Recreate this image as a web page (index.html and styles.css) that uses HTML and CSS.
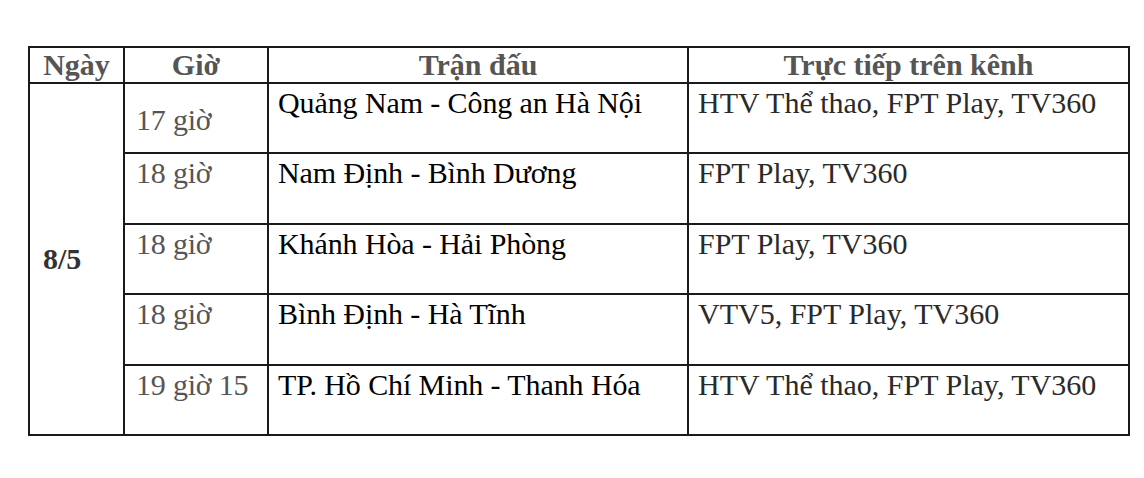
FILE: index.html
```html
<!DOCTYPE html>
<html lang="vi">
<head>
<meta charset="utf-8">
<link rel="stylesheet" href="styles.css">
</head>
<body>
<div class="page">
<table class="schedule">
  <colgroup>
    <col class="c-day"><col class="c-time"><col class="c-match"><col class="c-chan">
  </colgroup>
  <thead>
    <tr class="head-row">
      <th>Ngày</th><th>Giờ</th><th>Trận đấu</th><th>Trực tiếp trên kênh</th>
    </tr>
  </thead>
  <tbody>
    <tr class="row">
      <td class="day" rowspan="5">8/5</td>
      <td class="time first">17 giờ</td>
      <td class="match">Quảng Nam - Công an Hà Nội</td>
      <td class="chan">HTV Thể thao, FPT Play, TV360</td>
    </tr>
    <tr class="row">
      <td class="time">18 giờ</td>
      <td class="match">Nam Định - Bình Dương</td>
      <td class="chan">FPT Play, TV360</td>
    </tr>
    <tr class="row">
      <td class="time">18 giờ</td>
      <td class="match">Khánh Hòa - Hải Phòng</td>
      <td class="chan">FPT Play, TV360</td>
    </tr>
    <tr class="row">
      <td class="time">18 giờ</td>
      <td class="match">Bình Định - Hà Tĩnh</td>
      <td class="chan">VTV5, FPT Play, TV360</td>
    </tr>
    <tr class="row">
      <td class="time">19 giờ 15</td>
      <td class="match">TP. Hồ Chí Minh - Thanh Hóa</td>
      <td class="chan">HTV Thể thao, FPT Play, TV360</td>
    </tr>
  </tbody>
</table>
</div>
</body>
</html>
```
FILE: styles.css
```css
html, body {
  margin: 0;
  padding: 0;
  background: #ffffff;
}
.page {
  padding: 46px 0 0 28px;
}
.schedule {
  border-collapse: collapse;
  table-layout: fixed;
  width: 1100px;
  font-family: "Liberation Serif", "Times New Roman", serif;
}
.c-day { width: 95px; }
.c-time { width: 144px; }
.c-match { width: 420px; }
.c-chan { width: 441px; }
.head-row { height: 36px; }
.row { height: 70.4px; }
.schedule th, .schedule td {
  border: 2px solid #1a1a1a;
  padding: 0;
}
.schedule th {
  font-size: 30px;
  font-weight: bold;
  color: #555;
  text-align: center;
  vertical-align: middle;
  line-height: 32px;
}
.schedule td {
  vertical-align: top;
  font-size: 30px;
  line-height: 34px;
  padding: 2px 10px 0 9px;
}
.schedule td.day {
  vertical-align: middle;
  font-weight: bold;
  color: #333;
  padding: 0 0 0 13px;
}
.schedule td.time {
  color: #555;
  padding-left: 11px;
  letter-spacing: -0.2px;
}
.schedule td.time.first {
  padding-top: 19px;
}
.schedule td.match {
  color: #000;
  letter-spacing: -0.1px;
}
.schedule td.chan {
  color: #2a2a2a;
}
```
